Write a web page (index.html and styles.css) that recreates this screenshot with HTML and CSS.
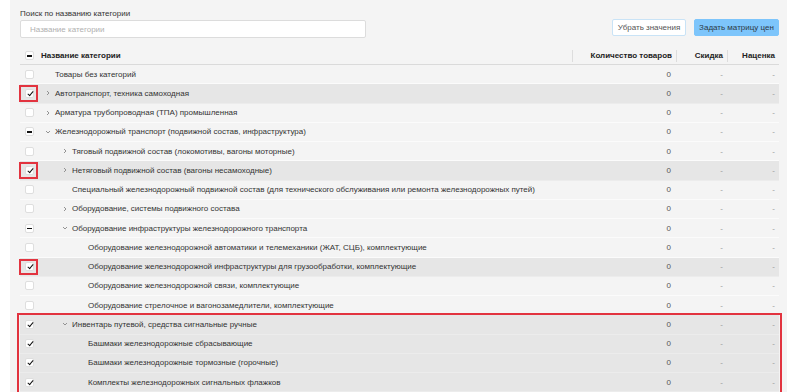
FILE: index.html
```html
<!DOCTYPE html>
<html lang="ru">
<head>
<meta charset="utf-8">
<link rel="stylesheet" href="styles.css">
</head>
<body>
<div class="panel">
  <div class="toolbar">
    <div class="search">
      <label class="search-label">Поиск по названию категории</label>
      <input class="search-input" type="text" placeholder="Название категории">
    </div>
    <div class="actions">
      <button class="btn btn-outline">Убрать значения</button>
      <button class="btn btn-primary">Задать матрицу цен</button>
    </div>
  </div>

  <div class="table">
    <div class="row head">
      <div class="cb-cell"><span class="cb minus"></span></div>
      <div class="name-h">Название категории</div>
      <div class="num-h">Количество товаров</div>
      <div class="num-h">Скидка</div>
      <div class="num-h">Наценка</div>
    </div>

    <div class="row">
      <div class="cb-cell"><span class="cb"></span></div>
      <div class="name l0"><span class="arr"></span><span class="txt">Товары без категорий</span></div>
      <div class="num">0</div><div class="dash">-</div><div class="dash">-</div>
    </div>
    <div class="row sel">
      <div class="cb-cell mark"><span class="cb checked"></span></div>
      <div class="name l0"><span class="arr"><svg viewBox="0 0 6 6"><path d="M2 1l2 2-2 2"/></svg></span><span class="txt">Автотранспорт, техника самоходная</span></div>
      <div class="num">0</div><div class="dash">-</div><div class="dash">-</div>
    </div>
    <div class="row">
      <div class="cb-cell"><span class="cb"></span></div>
      <div class="name l0"><span class="arr"><svg viewBox="0 0 6 6"><path d="M2 1l2 2-2 2"/></svg></span><span class="txt">Арматура трубопроводная (ТПА) промышленная</span></div>
      <div class="num">0</div><div class="dash">-</div><div class="dash">-</div>
    </div>
    <div class="row">
      <div class="cb-cell"><span class="cb minus"></span></div>
      <div class="name l0"><span class="arr"><svg viewBox="0 0 6 6"><path d="M1 2l2 2 2-2"/></svg></span><span class="txt">Железнодорожный транспорт (подвижной состав, инфраструктура)</span></div>
      <div class="num">0</div><div class="dash">-</div><div class="dash">-</div>
    </div>
    <div class="row">
      <div class="cb-cell"><span class="cb"></span></div>
      <div class="name l1"><span class="arr"><svg viewBox="0 0 6 6"><path d="M2 1l2 2-2 2"/></svg></span><span class="txt">Тяговый подвижной состав (локомотивы, вагоны моторные)</span></div>
      <div class="num">0</div><div class="dash">-</div><div class="dash">-</div>
    </div>
    <div class="row sel">
      <div class="cb-cell mark"><span class="cb checked"></span></div>
      <div class="name l1"><span class="arr"><svg viewBox="0 0 6 6"><path d="M2 1l2 2-2 2"/></svg></span><span class="txt">Нетяговый подвижной состав (вагоны несамоходные)</span></div>
      <div class="num">0</div><div class="dash">-</div><div class="dash">-</div>
    </div>
    <div class="row">
      <div class="cb-cell"><span class="cb"></span></div>
      <div class="name l1"><span class="arr"></span><span class="txt">Специальный железнодорожный подвижной состав (для технического обслуживания или ремонта железнодорожных путей)</span></div>
      <div class="num">0</div><div class="dash">-</div><div class="dash">-</div>
    </div>
    <div class="row">
      <div class="cb-cell"><span class="cb"></span></div>
      <div class="name l1"><span class="arr"><svg viewBox="0 0 6 6"><path d="M2 1l2 2-2 2"/></svg></span><span class="txt">Оборудование, системы подвижного состава</span></div>
      <div class="num">0</div><div class="dash">-</div><div class="dash">-</div>
    </div>
    <div class="row">
      <div class="cb-cell"><span class="cb minus"></span></div>
      <div class="name l1"><span class="arr"><svg viewBox="0 0 6 6"><path d="M1 2l2 2 2-2"/></svg></span><span class="txt">Оборудование инфраструктуры железнодорожного транспорта</span></div>
      <div class="num">0</div><div class="dash">-</div><div class="dash">-</div>
    </div>
    <div class="row">
      <div class="cb-cell"><span class="cb"></span></div>
      <div class="name l2"><span class="arr"></span><span class="txt">Оборудование железнодорожной автоматики и телемеханики (ЖАТ, СЦБ), комплектующие</span></div>
      <div class="num">0</div><div class="dash">-</div><div class="dash">-</div>
    </div>
    <div class="row sel">
      <div class="cb-cell mark"><span class="cb checked"></span></div>
      <div class="name l2"><span class="arr"></span><span class="txt">Оборудование железнодорожной инфраструктуры для грузообработки, комплектующие</span></div>
      <div class="num">0</div><div class="dash">-</div><div class="dash">-</div>
    </div>
    <div class="row">
      <div class="cb-cell"><span class="cb"></span></div>
      <div class="name l2"><span class="arr"></span><span class="txt">Оборудование железнодорожной связи, комплектующие</span></div>
      <div class="num">0</div><div class="dash">-</div><div class="dash">-</div>
    </div>
    <div class="row">
      <div class="cb-cell"><span class="cb"></span></div>
      <div class="name l2"><span class="arr"></span><span class="txt">Оборудование стрелочное и вагонозамедлители, комплектующие</span></div>
      <div class="num">0</div><div class="dash">-</div><div class="dash">-</div>
    </div>

    <div class="group">
      <div class="row sel">
        <div class="cb-cell"><span class="cb checked"></span></div>
        <div class="name l1"><span class="arr"><svg viewBox="0 0 6 6"><path d="M1 2l2 2 2-2"/></svg></span><span class="txt">Инвентарь путевой, средства сигнальные ручные</span></div>
        <div class="num">0</div><div class="dash">-</div><div class="dash">-</div>
      </div>
      <div class="row sel">
        <div class="cb-cell"><span class="cb checked"></span></div>
        <div class="name l2"><span class="arr"></span><span class="txt">Башмаки железнодорожные сбрасывающие</span></div>
        <div class="num">0</div><div class="dash">-</div><div class="dash">-</div>
      </div>
      <div class="row sel">
        <div class="cb-cell"><span class="cb checked"></span></div>
        <div class="name l2"><span class="arr"></span><span class="txt">Башмаки железнодорожные тормозные (горочные)</span></div>
        <div class="num">0</div><div class="dash">-</div><div class="dash">-</div>
      </div>
      <div class="row sel">
        <div class="cb-cell"><span class="cb checked"></span></div>
        <div class="name l2"><span class="arr"></span><span class="txt">Комплекты железнодорожных сигнальных флажков</span></div>
        <div class="num">0</div><div class="dash">-</div><div class="dash">-</div>
      </div>
    </div>
  </div>
</div>
</body>
</html>
```
FILE: styles.css
```css
* { box-sizing: border-box; }
html, body { margin: 0; padding: 0; background: #ffffff; overflow: hidden; }
body {
  font-family: "Liberation Sans", Arial, sans-serif;
  font-size: 8px;
  color: #333;
}
.panel {
  margin-left: 10px;
  width: 777px;
  height: 392px;
  background: #f4f4f4;
  padding: 9px 8px 0 10px;
}
.toolbar {
  display: flex;
  justify-content: space-between;
  align-items: flex-end;
}
.search { display: flex; flex-direction: column; }
.search-label { font-size: 8px; color: #333; line-height: 10px; margin-bottom: 1px; }
.search-input {
  width: 346px;
  height: 18px;
  border: 1px solid #dcdcdc;
  border-radius: 2px;
  background: #fff;
  padding: 0 9px;
  font-family: inherit;
  font-size: 8px;
  color: #333;
  outline: none;
}
.search-input::placeholder { color: #b0b0b0; }
.actions { display: flex; gap: 8px; margin-bottom: 2px; }
.btn {
  height: 17px;
  font-family: inherit;
  font-size: 8px;
  border-radius: 2px;
  cursor: pointer;
  padding: 0;
}
.btn-outline { background: #fff; border: 1px solid #c9e3f6; color: #555; width: 74px; }
.btn-primary { background: #7dc5fb; border: 1px solid #7dc5fb; color: #2d3a48; width: 85px; }

.table { margin-top: 9px; }
.row {
  display: grid;
  grid-template-columns: 17px 535px 104px 51px 52px;
  align-items: center;
  height: 19.25px;
  border-bottom: 1px solid #fbfbfb;
}
.row.head { height: 18px; border-bottom: 1px solid #dadada; }
.row.sel { background: #e6e6e6; border-bottom-color: #ececec; }
.cb-cell {
  height: 100%;
  display: flex;
  align-items: center;
  padding-left: 5px;
}
.cb-cell.mark {
  border: 2px solid #e2333f;
  margin-left: -1px;
  padding-left: 4px;
  height: calc(100% - 2px);
  width: 19px;
}
.cb {
  width: 9px;
  height: 9px;
  background: #fff;
  border: 1px solid #dedede;
  border-radius: 2px;
  position: relative;
}
.cb.minus::after {
  content: "";
  position: absolute;
  left: 1px; right: 1px; top: 3px;
  height: 1.5px;
  background: #111;
}
.cb.checked::after {
  content: "";
  position: absolute;
  left: 3px; top: 0px;
  width: 2px; height: 5px;
  border: solid #111;
  border-width: 0 1.5px 1.5px 0;
  transform: rotate(40deg);
}
.name-h { font-weight: bold; padding-left: 4px; color: #222; }
.num-h {
  font-weight: bold;
  text-align: right;
  padding-right: 4px;
  border-left: 1px solid #dddddd;
  line-height: 12px;
  color: #222;
}
.name { display: flex; align-items: center; white-space: nowrap; padding-left: 8px; }
.name.l1 { padding-left: 25px; }
.name.l2 { padding-left: 41px; }
.arr { flex: 0 0 10px; width: 10px; height: 6px; display: flex; align-items: center; }
.txt { flex: none; }
.arr svg { width: 6px; height: 6px; fill: none; stroke: #888; stroke-width: 0.9; }
.num { text-align: right; padding-right: 5px; color: #555; }
.dash { text-align: right; padding-right: 4px; color: #999; }
.group { outline: 2px solid #e2333f; outline-offset: 0px; margin-right: -1px; margin-left: -1px; padding-left: 1px; padding-right: 1px; }
```
